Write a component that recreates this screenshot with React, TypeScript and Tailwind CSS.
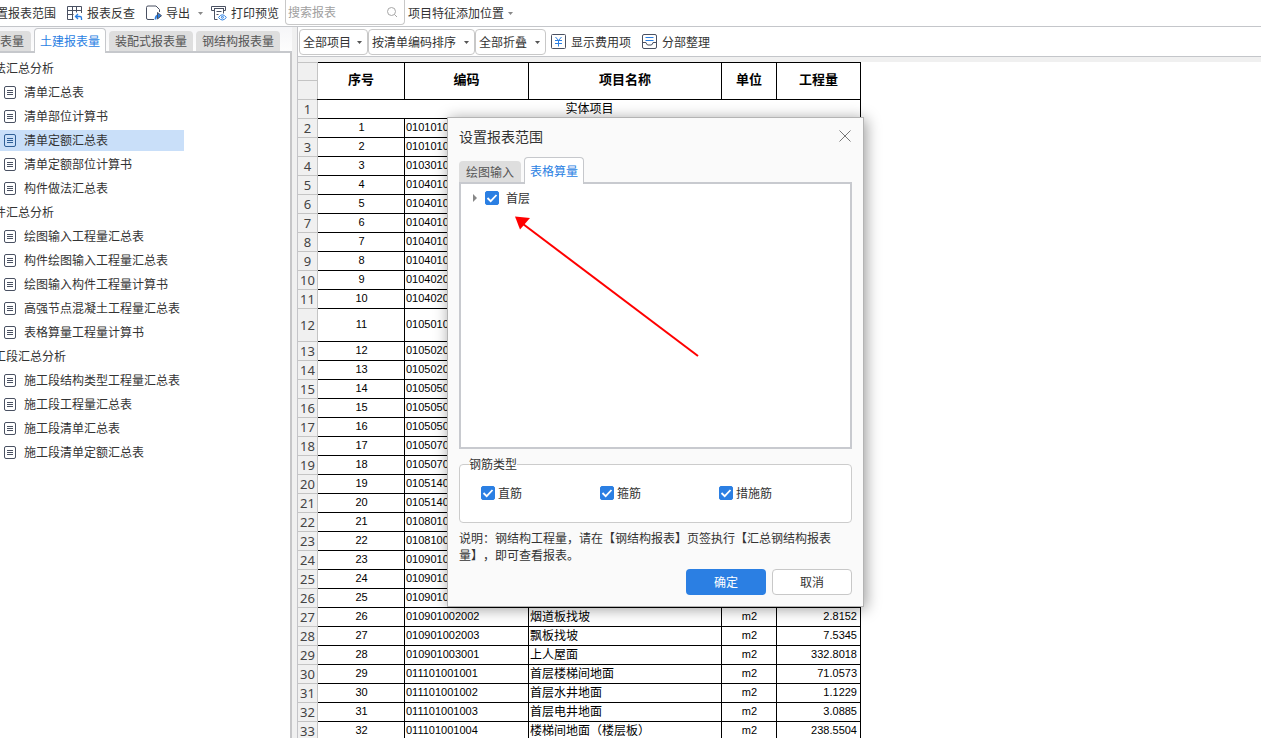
import React, { useState } from 'react';

interface Row {
  code: string;
  name?: string;
  unit?: string;
  qty?: string;
}

const ROWS: Row[] = [
  { code: '010101001001' },
  { code: '010101002001' },
  { code: '010301004001' },
  { code: '010401001001' },
  { code: '010401003001' },
  { code: '010401004001' },
  { code: '010401005001' },
  { code: '010401008001' },
  { code: '010402001001' },
  { code: '010402001002' },
  { code: '010501001001' },
  { code: '010502001001' },
  { code: '010502002001' },
  { code: '010505001001' },
  { code: '010505003001' },
  { code: '010505008001' },
  { code: '010507001001' },
  { code: '010507005001' },
  { code: '010514001001' },
  { code: '010514001002' },
  { code: '010801001001' },
  { code: '010810001001' },
  { code: '010901001001' },
  { code: '010901001002' },
  { code: '010901002001' },
  { code: '010901002002', name: '烟道板找坡', unit: 'm2', qty: '2.8152' },
  { code: '010901002003', name: '飘板找坡', unit: 'm2', qty: '7.5345' },
  { code: '010901003001', name: '上人屋面', unit: 'm2', qty: '332.8018' },
  { code: '011101001001', name: '首层楼梯间地面', unit: 'm2', qty: '71.0573' },
  { code: '011101001002', name: '首层水井地面', unit: 'm2', qty: '1.1229' },
  { code: '011101001003', name: '首层电井地面', unit: 'm2', qty: '3.0885' },
  { code: '011101001004', name: '楼梯间地面（楼层板）', unit: 'm2', qty: '238.5504' },
];

const TREE = [
  {
    title: '法汇总分析',
    items: ['清单汇总表', '清单部位计算书', '清单定额汇总表', '清单定额部位计算书', '构件做法汇总表'],
  },
  {
    title: '件汇总分析',
    items: ['绘图输入工程量汇总表', '构件绘图输入工程量汇总表', '绘图输入构件工程量计算书', '高强节点混凝土工程量汇总表', '表格算量工程量计算书'],
  },
  {
    title: '工段汇总分析',
    items: ['施工段结构类型工程量汇总表', '施工段工程量汇总表', '施工段清单汇总表', '施工段清单定额汇总表'],
  },
];

export default function App() {
  return (
    <div className="relative flex h-screen flex-col overflow-hidden bg-[#f0f0f0] font-['Noto_Sans_CJK_SC',sans-serif] text-xs leading-4 text-[#333]">
      <Toolbar />
      <div className="flex min-h-0 flex-1">
        <Sidebar />
        <main className="ml-[5px] flex min-w-0 flex-1 flex-col border-l border-[#c4c4c8]">
          <ReportBar />
          <ReportTable />
        </main>
      </div>
      <RangeDialog />
    </div>
  );
}

const Toolbar = () => (
  <header className="flex h-[27px] shrink-0 items-center border-b border-[#c4c6ca] bg-white whitespace-nowrap">
    <button className="-ml-1">置报表范围</button>
    <button className="ml-[11px] flex items-center gap-1">
      <GridBackIcon />
      报表反查
    </button>
    <button className="ml-[11px] flex items-center gap-1">
      <ExportIcon />
      导出
      <Caret className="ml-1 text-[#888]" />
    </button>
    <button className="ml-2 flex items-center gap-1">
      <PreviewIcon />
      打印预览
    </button>
    <label className="ml-1.5 flex h-[25px] w-[120px] items-center self-start rounded-b border border-t-0 border-[#c8c8c8] pr-1.5 pl-0.5">
      <input
        type="search"
        aria-label="搜索报表"
        placeholder="搜索报表"
        className="w-full min-w-0 outline-none placeholder:text-[#a0a0a0]"
      />
      <svg width="12" height="12" viewBox="0 0 12 12" fill="none" stroke="#a6a6a6" className="shrink-0">
        <circle cx="5.5" cy="5.5" r="4" />
        <path d="M8.5 8.5l2.5 2.5" />
      </svg>
    </label>
    <button className="ml-[3px] flex items-center gap-1">
      项目特征添加位置
      <Caret className="text-[#888]" />
    </button>
  </header>
);

const Sidebar = () => {
  const [selected, setSelected] = useState('清单定额汇总表');

  return (
    <aside className="flex w-[292px] shrink-0 flex-col whitespace-nowrap">
      <nav className="flex h-[26px] shrink-0 items-end border-b-2 border-[#c6c8cc] bg-linear-to-b from-[#f6f6f8] to-[#fdfdfd]">
        <button className="h-5 w-[31px] rounded-tr bg-[#dedede] text-left text-[#555]">表量</button>
        <button className="-mb-0.5 ml-[3px] h-[25px] w-[72px] rounded-t border border-b-0 border-[#c6c8cc] bg-white text-[#2b7fe3]">
          土建报表量
        </button>
        <button className="ml-[3px] h-5 w-[84px] rounded-t bg-[#dedede] text-[#555]">装配式报表量</button>
        <button className="ml-[3px] h-5 w-[84px] rounded-t bg-[#dedede] text-[#555]">钢结构报表量</button>
      </nav>
      <div className="min-h-0 flex-1 overflow-hidden border-r-2 border-[#c6c6c8] bg-white pt-[3px]">
        {TREE.map((group) => (
          <section key={group.title}>
            <h2 className="-ml-1.5 h-6 leading-6">{group.title}</h2>
            <ul>
              {group.items.map((item) => (
                <li key={item} className="flex h-6 items-center">
                  <button
                    onClick={() => setSelected(item)}
                    className={`flex h-[21px] w-[184px] items-center gap-2 pl-1 ${selected === item ? 'bg-[#c9dff9] text-[#2f5f96]' : 'text-[#4a5162]'}`}
                  >
                    <ReportIcon />
                    <span className="text-[#333]">{item}</span>
                  </button>
                </li>
              ))}
            </ul>
          </section>
        ))}
      </div>
    </aside>
  );
};

const ReportBar = () => (
  <div className="flex h-[30px] shrink-0 items-center border-b border-[#c4c6ca] bg-white pl-px whitespace-nowrap">
    <div className="flex">
      <DropDown label="项目范围" value="全部项目" width="w-[69px]" />
      <DropDown label="排序方式" value="按清单编码排序" width="w-[107px]" />
      <DropDown label="折叠方式" value="全部折叠" width="w-[71px]" />
    </div>
    <button className="ml-[5px] flex items-center gap-1">
      <FeeIcon />
      显示费用项
    </button>
    <button className="ml-[11px] flex items-center gap-1">
      <ArrangeIcon />
      分部整理
    </button>
  </div>
);

const DropDown = ({ label, value, width }: { label: string; value: string; width: string }) => (
  <div className={`relative ${width}`}>
    <select
      aria-label={label}
      className="h-[26px] w-full appearance-none rounded border border-[#c8c8c8] bg-white pl-[3px] outline-none"
    >
      <option>{value}</option>
    </select>
    <Caret className="pointer-events-none absolute top-3 right-1.5 text-[#555]" />
  </div>
);

const ReportTable = () => {
  const th = 'border border-black pb-1 text-[13px] font-bold';
  const rowNo = "border border-[#c4c4c4] bg-[#f0f0f0] text-center font-['Noto_Sans',sans-serif] text-[13px] font-normal text-[#444]";
  const td = 'border border-black pb-0.5 pl-px leading-4';
  const num = "font-['Liberation_Sans',sans-serif] text-[11px]";

  return (
    <div className="mt-[5px] min-h-0 flex-1 overflow-hidden bg-white">
      <table className="-ml-px w-[564px] table-fixed border-collapse text-black">
        <colgroup>
          <col className="w-5" />
          <col className="w-[87px]" />
          <col className="w-[124px]" />
          <col className="w-[193px]" />
          <col className="w-[55px]" />
          <col className="w-[84px]" />
        </colgroup>
        <thead>
          <tr className="h-[18px]">
            <td className={rowNo} />
            <th rowSpan={2} className={`${th} border-l-0`}>序号</th>
            <th rowSpan={2} className={th}>编码</th>
            <th rowSpan={2} className={th}>项目名称</th>
            <th rowSpan={2} className={th}>单位</th>
            <th rowSpan={2} className={th}>工程量</th>
          </tr>
          <tr className="h-[19px]">
            <td className={rowNo} />
          </tr>
        </thead>
        <tbody>
          <tr className="h-[19px]">
            <th className={rowNo}>1</th>
            <td colSpan={5} className={`${td} border-l-0 text-center`}>实体项目</td>
          </tr>
          {ROWS.map((row, i) => (
            <tr key={row.code} className={i === 10 ? 'h-[33px]' : 'h-[19px]'}>
              <th className={rowNo}>{i + 2}</th>
              <td className={`${td} ${num} border-l-0 text-center`}>{i + 1}</td>
              <td className={`${td} ${num}`}>{row.code}</td>
              <td className={td}>{row.name}</td>
              <td className={`${td} ${num} text-center`}>{row.unit}</td>
              <td className={`${td} ${num} pr-[3px] text-right`}>{row.qty}</td>
            </tr>
          ))}
        </tbody>
      </table>
    </div>
  );
};

const RangeDialog = () => (
  <div
    role="dialog"
    aria-label="设置报表范围"
    className="absolute top-[117px] left-[447px] flex w-[417px] flex-col border border-[#b4b4b4] bg-[#fafafa] px-[11px] pb-[11px] shadow-[2px_2px_14px_rgba(0,0,0,0.4)]"
  >
    <div className="flex h-[39px] items-center justify-between pb-1">
      <h1 className="text-sm">设置报表范围</h1>
      <button aria-label="关闭" className="pr-px">
        <svg width="12" height="12" viewBox="0 0 12 12" stroke="#777">
          <path d="M.5.5l11 11M11.5.5l-11 11" />
        </svg>
      </button>
    </div>

    <div className="flex h-[25px] items-end gap-[3px]">
      <button className="h-[21px] w-[62px] rounded-t bg-[#dedede] text-[#555]">绘图输入</button>
      <button className="relative z-10 -mb-0.5 h-[27px] w-[60px] rounded-t border border-b-0 border-[#c6c8cc] bg-white text-[#2b7fe3]">
        表格算量
      </button>
    </div>
    <div className="relative h-[267px] border-2 border-[#c8cacf] bg-white pt-1.5 pl-3">
      <div className="flex items-center">
        <button aria-label="展开" className="mr-2 text-[#888]">
          <svg width="4" height="8" viewBox="0 0 4 8" fill="currentColor">
            <path d="M0 0l4 4-4 4z" />
          </svg>
        </button>
        <Check label="首层" gap="gap-[7px]" />
      </div>
      <svg className="absolute top-8 left-[54px]" width="186" height="142" viewBox="0 0 186 142">
        <path d="M8 8l175 132" stroke="#f00" strokeWidth="2" />
        <path d="M0 0.5l15 1.5-10 11.5z" fill="#f00" />
      </svg>
    </div>

    <fieldset className="mt-[7px] h-[67px] rounded border border-[#ccc] bg-white pl-[21px]">
      <legend className="-ml-3">钢筋类型</legend>
      <div className="flex pt-[13px]">
        <div className="w-[119px]"><Check label="直筋" gap="gap-[3px]" /></div>
        <div className="w-[119px]"><Check label="箍筋" gap="gap-[3px]" /></div>
        <Check label="措施筋" gap="gap-[3px]" />
      </div>
    </fieldset>

    <p className="mt-1.5 leading-[17px] [text-spacing-trim:space-all]">
      说明：钢结构工程量，请在【钢结构报表】页签执行【汇总钢结构报表量】，即可查看报表。
    </p>

    <div className="mt-1.5 flex justify-end gap-1.5">
      <button className="h-[26px] w-20 rounded bg-[#2b7fe3] text-white">确定</button>
      <button className="h-[26px] w-20 rounded border border-[#c8c8c8] bg-white">取消</button>
    </div>
  </div>
);

const Check = ({ label, gap }: { label: string; gap: string }) => (
  <label className={`flex items-center ${gap}`}>
    <span className="relative flex">
      <input
        type="checkbox"
        defaultChecked
        className="peer size-3.5 appearance-none rounded-xs border border-[#aaa] bg-white checked:border-[#2b7fe3] checked:bg-[#2b7fe3]"
      />
      <svg
        className="pointer-events-none absolute inset-0 hidden peer-checked:block"
        width="14"
        height="14"
        viewBox="0 0 14 14"
        fill="none"
        stroke="#fff"
        strokeWidth="1.8"
      >
        <path d="M2.5 7l3.2 3.2L11.5 4" />
      </svg>
    </span>
    {label}
  </label>
);

// Icons
const Caret = ({ className = '' }: { className?: string }) => (
  <svg className={className} width="5" height="3" viewBox="0 0 5 3" fill="currentColor">
    <path d="M0 0h5L2.5 3z" />
  </svg>
);

const ReportIcon = () => (
  <svg width="12" height="13" viewBox="0 0 12 13" fill="none" stroke="currentColor">
    <rect x=".5" y=".5" width="11" height="12" rx="1.5" />
    <path d="M3 4.5h6M3 6.5h6M3 8.5h6" />
  </svg>
);

const GridBackIcon = () => (
  <svg width="16" height="16" viewBox="0 0 16 16" fill="none" stroke="#4a5162">
    <path d="M6.5 14.5H.5v-13h14V8M.5 5.5h14M.5 9.5h6M5.5 1.5v13M9.5 1.5v6" />
    <path d="M8.5 11.5H13q1.500 0 1.500 1.500v2M11 9l-2.500 2.500L11 14" stroke="#2b7fe3" strokeWidth="1.3" />
  </svg>
);

const ExportIcon = () => (
  <svg width="16" height="16" viewBox="0 0 16 16" fill="none" stroke="#4a5162">
    <path d="M8 14.5H2Q.5 14.5.5 13V2.5Q.5 1 2 1h8l3.500 3.500V7" />
    <path d="M9.5 14.5q0-4 3-4" stroke="#2b7fe3" strokeWidth="1.8" />
    <path d="M11.5 7.5l4 3.200-4 3.300z" fill="#2b7fe3" />
  </svg>
);

const PreviewIcon = () => (
  <svg width="16" height="16" viewBox="0 0 16 16" fill="none" stroke="#4a5162">
    <path d="M3.5 5.5H.5v-4h14v4h-2M3 3.5h10M3.5 3.5v11h3M12.5 3.5v5M5.5 6.5h5M5.5 9.5h2" />
    <path d="M7.5 12.5q3.800-5.500 7.800 0-4 5-7.800 0z" stroke="#2b7fe3" />
    <circle cx="11.4" cy="12.3" r="1" stroke="#2b7fe3" />
  </svg>
);

const FeeIcon = () => (
  <svg width="16" height="16" viewBox="0 0 16 16" fill="none" stroke="#4a5162">
    <rect x=".5" y=".5" width="14" height="14" rx="1" />
    <path d="M4.5 3l3 3.500 3-3.500M7.5 6.5v6M4 6.5h7M4 9.5h7" stroke="#2b7fe3" />
  </svg>
);

const ArrangeIcon = () => (
  <svg width="16" height="16" viewBox="0 0 16 16" fill="none" stroke="#4a5162">
    <rect x=".5" y=".5" width="14" height="14" rx="1.5" />
    <path d="M.5 8.5H4Q4.500 11 6 11h3q1.500 0 2-2.500h3.500" />
    <path d="M3.5 3.5h8M3.5 6.5h8" stroke="#2b7fe3" />
  </svg>
);
